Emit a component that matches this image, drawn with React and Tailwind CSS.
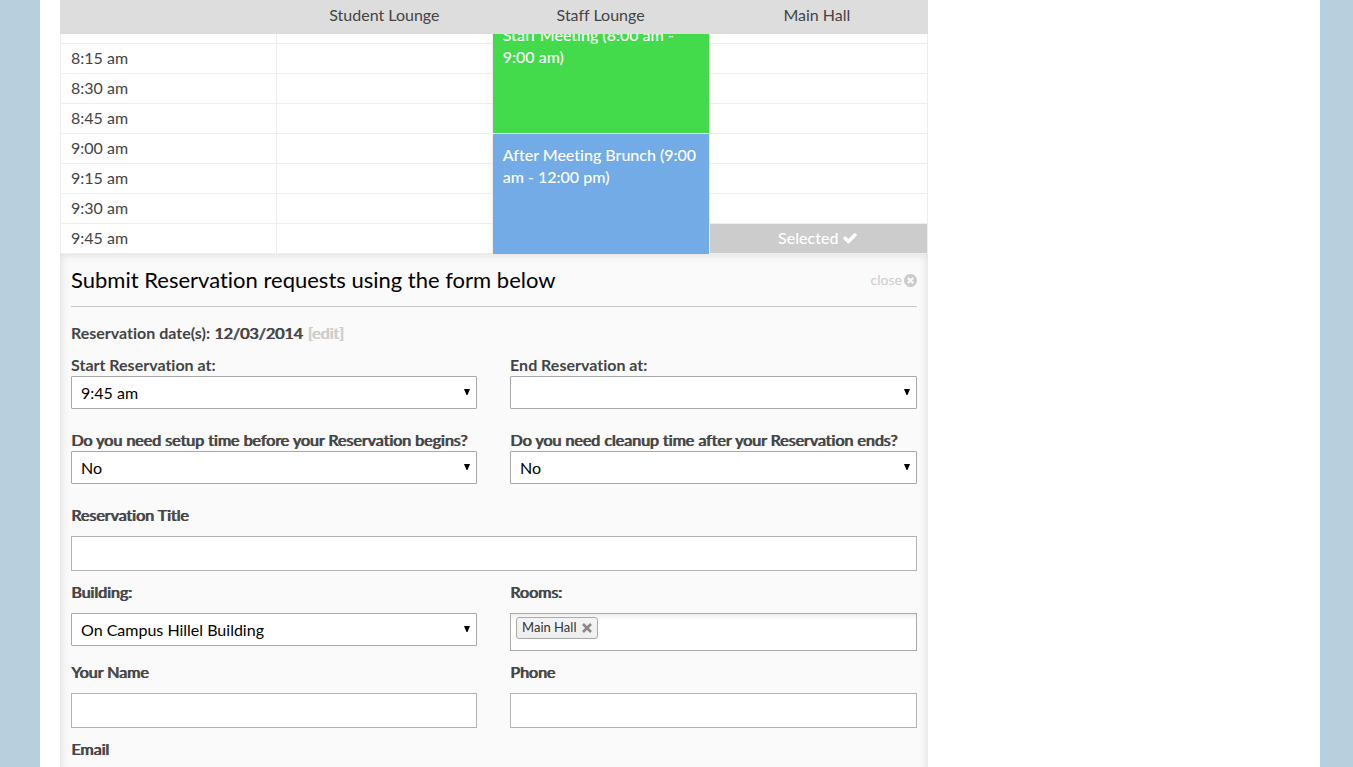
import React from "react";

const STRONG = "font-bold text-[#444]";
const SMEARED = "font-normal text-[#444] [text-shadow:1px_0_0_#444]";
const FIELD = "block w-full h-[35px] border border-[#b3b3b3] bg-white px-[9px] text-[16px] text-black";

function CheckIcon() {
  return (
    <svg viewBox="0 0 1792 1792" className="size-4" fill="currentColor" aria-hidden="true">
      <path d="M1671 566q0 40-28 68l-724 724-136 136q-28 28-68 28t-68-28l-136-136-362-362q-28-28-28-68t28-68l136-136q28-28 68-28t68 28l294 295 656-657q28-28 68-28t68 28l136 136q28 28 28 68z" />
    </svg>
  );
}

function CloseIcon() {
  return (
    <svg viewBox="128 128 1536 1536" className="size-[13px]" fill="currentColor" aria-hidden="true">
      <path d="M1277 1122q0-26-19-45l-181-181 181-181q19-19 19-45 0-27-19-46l-90-90q-19-19-46-19-26 0-45 19l-181 181-181-181q-19-19-45-19-27 0-46 19l-90 90q-19 19-19 46 0 26 19 45l181 181-181 181q-19 19-19 45 0 27 19 46l90 90q19 19 46 19 26 0 45-19l181-181 181 181q19 19 45 19 27 0 46-19l90-90q19-19 19-46zm387-226q0 209-103 385.5t-279.5 279.5-385.5 103-385.5-103-279.5-279.5-103-385.5 103-385.5 279.5-279.5 385.5-103 385.5 103 279.5 279.5 103 385.5z" />
    </svg>
  );
}

function Label({ strong, ...rest }) {
  return <label {...rest} className={`block text-[16px] leading-[22px] ${strong ? STRONG : SMEARED}`} />;
}

function SelectField({ id, label, options, gap, strong }) {
  return (
    <div>
      <Label htmlFor={id} strong={strong}>{label}</Label>
      <div className={gap ? "relative mt-[10px]" : "relative"}>
        <select
          id={id}
          className="block h-[33px] w-full appearance-none rounded-[1px] border border-[#a9a9a9] bg-white pt-px pr-6 pl-[9px] text-[16px] text-black"
        >
          {options.map((o) => (
            <option key={o}>{o}</option>
          ))}
        </select>
        <svg viewBox="0 0 6 6" className="pointer-events-none absolute top-[13px] right-[7px] size-[6px]" aria-hidden="true">
          <path d="M0 0H6L3.5 6H2.5Z" fill="#000" />
        </svg>
      </div>
    </div>
  );
}

function TextField({ id, label }) {
  return (
    <div>
      <Label htmlFor={id}>{label}</Label>
      <input id={id} type="text" className={`${FIELD} mt-[10px]`} />
    </div>
  );
}

const TIMES = ["8:00", "8:15", "8:30", "8:45", "9:00", "9:15", "9:30", "9:45"];
const CELL = "h-[30px] border-r border-b border-[#eee] p-0 align-top";
const EVENT = "border-r border-r-[#eee] px-[10px] pt-[10px] align-top leading-[22px] font-medium text-white";

function Schedule() {
  return (
    <>
      <div className="grid h-[34px] grid-cols-4 bg-[#ddd] pt-1 pr-[3px] text-center leading-[22px]">
        <span />
        <span>Student Lounge</span>
        <span>Staff Lounge</span>
        <span>Main Hall</span>
      </div>
      <div className="flex h-[220px] flex-col justify-end overflow-hidden">
        <table className="w-full table-fixed border-separate border-spacing-0 border-l border-[#eee]">
          <colgroup>
            <col className="w-[24.9%]" />
            <col className="w-[24.9%]" />
            <col className="w-[25%]" />
            <col />
          </colgroup>
          <tbody>
            {TIMES.map((t, i) => (
              <tr key={t}>
                <td className={`${CELL} pt-[3px] pl-[10px] leading-[22px]`}>{t} am</td>
                <td className={CELL} />
                {i === 0 && (
                  <td rowSpan={4} className={`${EVENT} border-b border-b-white bg-[#43db4c]`}>
                    Staff Meeting (8:00 am - 9:00 am)
                  </td>
                )}
                {i === 4 && (
                  <td rowSpan={4} className={`${EVENT} bg-[#73abe7]`}>
                    After Meeting Brunch (9:00 am - 12:00 pm)
                  </td>
                )}
                {i === 7 ? (
                  <td className={`${CELL} bg-[#ccc] pt-[3px]`}>
                    <button type="button" className="flex w-full items-center justify-center gap-1 leading-[22px] font-medium text-white">
                      Selected <CheckIcon />
                    </button>
                  </td>
                ) : (
                  <td className={CELL} />
                )}
              </tr>
            ))}
          </tbody>
        </table>
      </div>
    </>
  );
}

function ReservationForm() {
  return (
    <form className="grow bg-[#fafafa] px-[11px] pb-5 shadow-[inset_0_0_10px_#d8d8d8]">
      <div className="flex h-[53px] items-center justify-between border-b border-[#c8c8c8]">
        <h2 className="text-[22px] leading-[30px] text-black">Submit Reservation requests using the form below</h2>
        <button type="button" className="flex items-center gap-[2px] text-[14px] leading-[18px] text-[#ccc]">
          close <CloseIcon />
        </button>
      </div>
      <p className={`mt-[15px] leading-[22px] ${STRONG}`}>
        Reservation date(s): <span className={SMEARED}>12/03/2014</span>{" "}
        <button type="button" className="ml-px font-normal text-[#ccc] [text-shadow:1px_0_0_#ccc]">[edit]</button>
      </p>
      <div className="mt-[10px] grid grid-cols-[48%_1fr] gap-x-[33px] gap-y-5">
        <SelectField strong id="start" label="Start Reservation at:" options={["9:45 am", "10:00 am"]} />
        <SelectField strong id="end" label="End Reservation at:" options={["", "10:00 am"]} />
        <SelectField id="setup" label="Do you need setup time before your Reservation begins?" options={["No", "Yes"]} />
        <SelectField id="cleanup" label="Do you need cleanup time after your Reservation ends?" options={["No", "Yes"]} />
      </div>
      <div className="mt-5">
        <TextField id="title" label="Reservation Title" />
      </div>
      <div className="mt-[10px] grid grid-cols-[48%_1fr] gap-x-[33px] gap-y-[10px]">
        <SelectField gap id="building" label="Building:" options={["On Campus Hillel Building"]} />
        <div role="group" aria-labelledby="rooms">
          <span id="rooms" className={`block leading-[22px] ${SMEARED}`}>Rooms:</span>
          <div className="mt-[10px] flex h-[38px] items-start border border-[#aaa] bg-white bg-linear-to-b from-[#eee] to-white to-[6px] px-[5px] pt-[3px]">
            <span className="flex h-[22px] items-center gap-[6px] rounded-[3px] border border-[#aaa] bg-linear-to-b from-[#f4f4f4] to-[#eee] px-[5px] text-[13px] text-[#333]">
              Main Hall
              <button type="button" aria-label="Remove Main Hall">
                <svg viewBox="0 0 10 10" className="size-[10px]" aria-hidden="true">
                  <path d="M1 1L9 9M9 1L1 9" stroke="#888" strokeWidth="2.6" />
                </svg>
              </button>
            </span>
          </div>
        </div>
        <TextField id="name" label="Your Name" />
        <TextField id="phone" label="Phone" />
        <TextField id="email" label="Email" />
      </div>
    </form>
  );
}

export default function App() {
  return (
    <div className="flex h-screen overflow-hidden bg-[#b8cfde] pr-[33px] pl-10 font-['Lato','Liberation_Sans',sans-serif] text-[16px] text-[#444] [font-variant-ligatures:none]">
      <main className="grow bg-white px-5">
        <div className="flex min-h-full w-[70%] flex-col">
          <Schedule />
          <ReservationForm />
        </div>
      </main>
    </div>
  );
}
